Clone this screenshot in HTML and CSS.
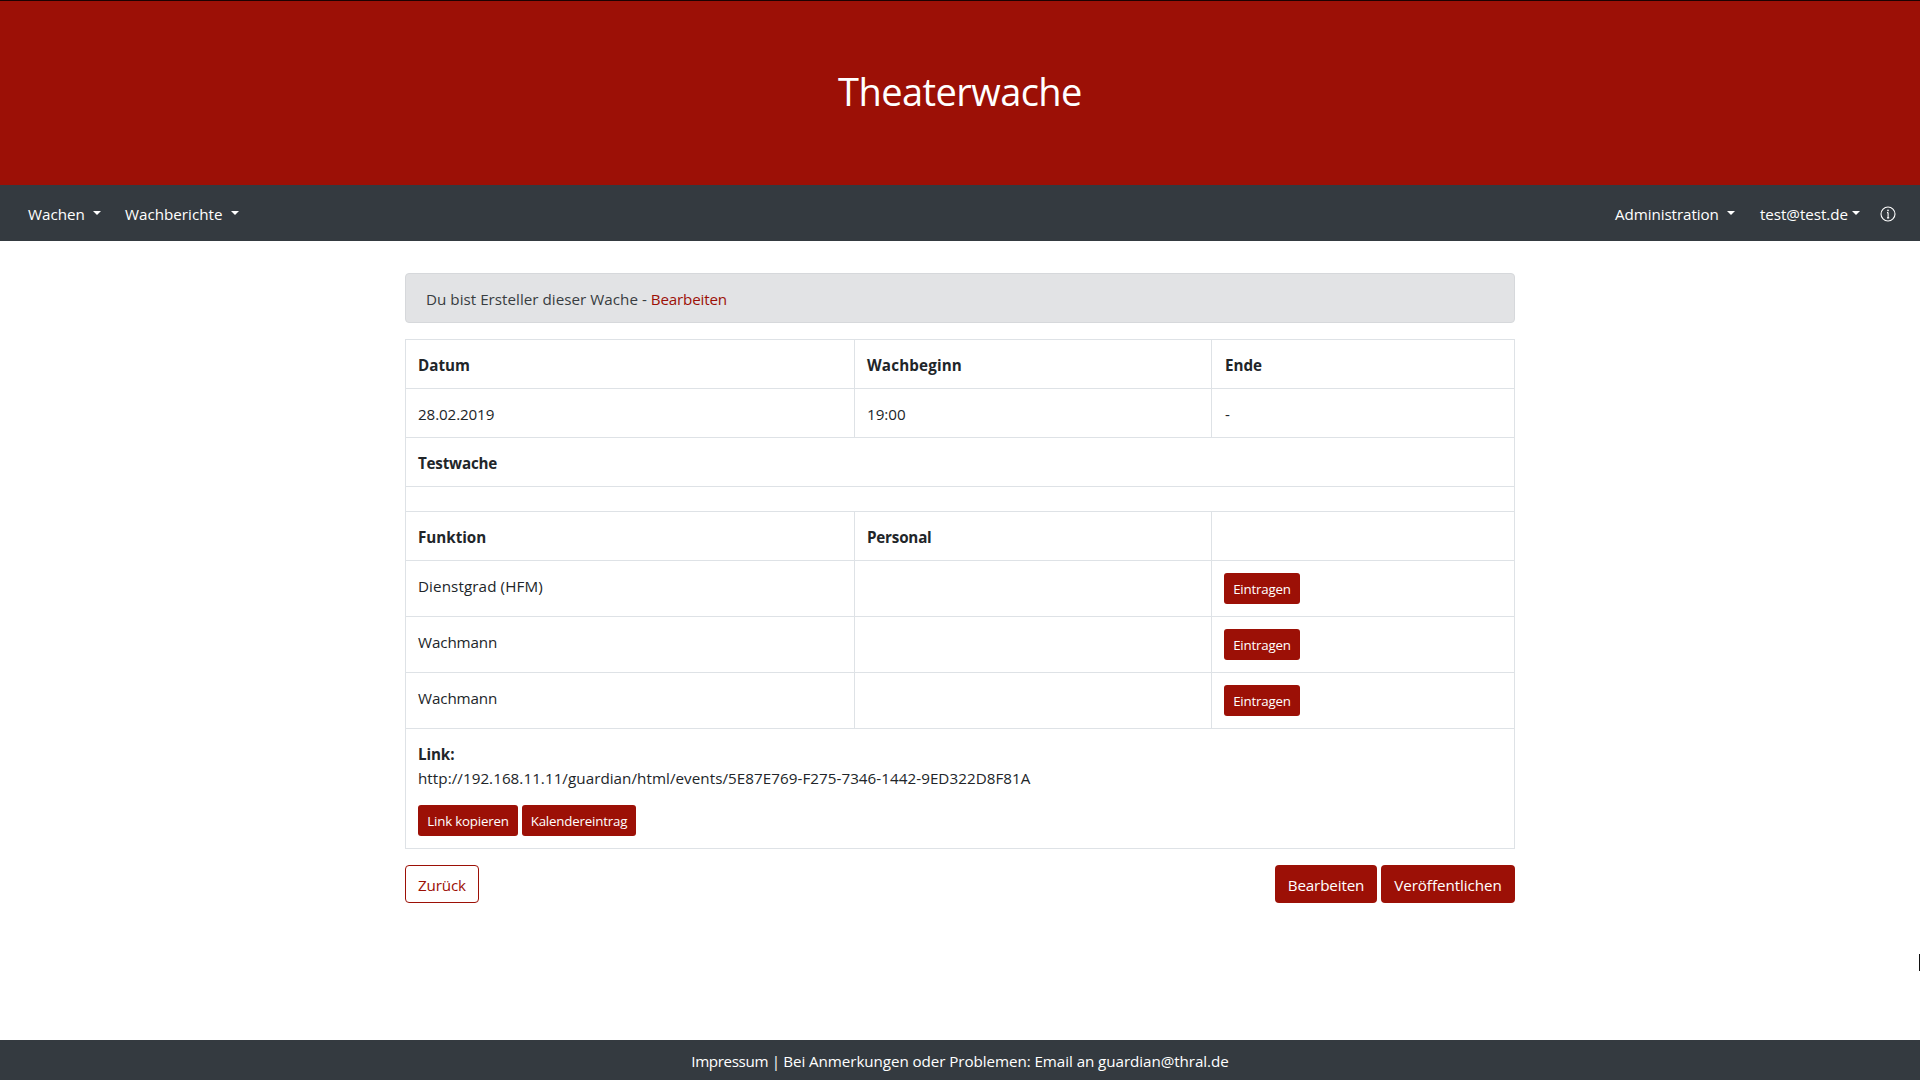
FILE: index.html
```
<!DOCTYPE html>
<html lang="de">
<head>
<meta charset="utf-8">
<title>Theaterwache</title>
<link rel="stylesheet" href="styles.css">
</head>
<body>
<header class="jumbotron"><h1 class="title">Theaterwache</h1></header>
<nav class="navbar">
  <a class="nav-link wachen">Wachen<span class="caret"></span></a>
  <a class="nav-link berichte">Wachberichte<span class="caret"></span></a>
  <a class="nav-link admin">Administration<span class="caret"></span></a>
  <a class="nav-link user">test@test.de<span class="caret"></span></a>
  <a class="nav-link info" aria-label="Info"><svg class="info-icon" viewBox="0 0 16 16"><circle cx="8" cy="8" r="7" fill="none" stroke="currentColor" stroke-width="1.1"/><path d="M8.1 12V6.5M7 6.6h1.1M7 11.9h2.2" fill="none" stroke="currentColor" stroke-width="1.1"/><circle cx="8" cy="4.4" r=".85" fill="currentColor"/></svg></a>
</nav>
<main class="container">
  <div class="alert"><span class="alert-text">Du bist Ersteller dieser Wache - </span><a class="alert-link">Bearbeiten</a></div>
  <table class="table">
    <colgroup><col class="col-a"><col class="col-b"><col class="col-c"></colgroup>
    <tbody>
      <tr><th>Datum</th><th class="wide">Wachbeginn</th><th class="end">Ende</th></tr>
      <tr><td>28.02.2019</td><td class="time">19:00</td><td class="end">-</td></tr>
      <tr><th class="tight" colspan="3">Testwache</th></tr>
      <tr><td class="spacer" colspan="3"></td></tr>
      <tr><th>Funktion</th><th class="tight">Personal</th><th></th></tr>
      <tr><td class="rank">Dienstgrad (HFM)</td><td></td><td class="action"><a class="btn btn-sm enter">Eintragen</a></td></tr>
      <tr><td>Wachmann</td><td></td><td class="action"><a class="btn btn-sm enter">Eintragen</a></td></tr>
      <tr><td>Wachmann</td><td></td><td class="action"><a class="btn btn-sm enter">Eintragen</a></td></tr>
      <tr><td class="link-cell" colspan="3"><b class="link-label">Link:</b><div class="url">http://192.168.11.11/guardian/html/events/5E87E769-F275-7346-1442-9ED322D8F81A</div>
        <div class="link-actions"><a class="btn btn-sm copy">Link kopieren</a><a class="btn btn-sm calendar">Kalendereintrag</a></div></td></tr>
    </tbody>
  </table>
  <div class="actions">
    <a class="btn btn-outline back">Zurück</a>
    <a class="btn edit">Bearbeiten</a>
    <a class="btn publish">Veröffentlichen</a>
  </div>
</main>
<div class="edge-mark"></div>
<footer class="footer"><span class="imprint">Impressum | </span>Bei Anmerkungen oder Problemen: Email an guardian@thral.de</footer>
</body>
</html>
```
FILE: styles.css
```
* { box-sizing: border-box; }
body {
  margin: 0;
  height: 1080px;
  display: flex;
  flex-direction: column;
  overflow: hidden;
  background: #fff;
  color: #212529;
  font: 15.2px/24px "Open Sans", "Noto Sans", sans-serif;
}
.jumbotron {
  height: 185px;
  border-top: 1px solid #1c0202;
  background: #9c1006;
  color: #fff;
  text-align: center;
  padding-top: 66px;
}
.title { margin: 0; font-size: 38px; line-height: 48px; font-weight: 400; letter-spacing: -.56px; }
.navbar {
  height: 56px;
  display: flex;
  align-items: center;
  padding: 2px 24px 0 28px;
  background: #343a40;
  color: #fff;
}
.nav-link { display: flex; align-items: center; white-space: nowrap; }
.caret {
  margin: -3px 0 0 auto;
  border: 4.8px solid transparent;
  border-top-color: currentColor;
  border-bottom: 0;
}
.wachen { width: 73px; margin-right: 24px; }
.berichte { width: 114px; margin-right: auto; }
.admin { width: 120px; margin-right: 25px; letter-spacing: -.08px; }
.user { width: 100px; margin-right: 20px; letter-spacing: -.06px; }
.info-icon { width: 16px; height: 16px; }
.container { width: 1110px; margin: 32px auto 0; flex: 1; }
.alert {
  height: 50px;
  margin-bottom: 16px;
  padding: 13px 20px 11px;
  border: 1px solid #d6d8db;
  border-radius: 4px;
  background: #e2e3e5;
  color: #383d41;
  white-space: pre;
}
.alert-text { letter-spacing: .02px; }
.alert-link { color: #9c1006; letter-spacing: -.18px; }
.table {
  width: 1109px;
  table-layout: fixed;
  border-collapse: collapse;
  margin-bottom: 16px;
}
.col-a { width: 449px; }
.col-b { width: 357px; }
.col-c { width: 303px; }
.table td, .table th {
  border: 1px solid #dee2e6;
  padding: 13px 12px 11px;
  vertical-align: top;
  text-align: left;
  letter-spacing: -.12px;
}
.table th { letter-spacing: -.02px; }
.table .wide { letter-spacing: .16px; }
.table .time { letter-spacing: 0; }
.table .rank { letter-spacing: .1px; }
.table .tight { letter-spacing: -.2px; }
.table .end { padding-left: 13px; }
.table .spacer { height: 25px; padding: 0; }
.table .action { padding: 12px; }
.link-label { display: block; }
.table .link-cell { padding-bottom: 12px; }
.url { letter-spacing: .05px; }
.link-actions { display: flex; gap: 4px; margin-top: 15px; }
.btn {
  display: block;
  height: 38px;
  padding-top: 8px;
  border-radius: 4px;
  background: #9c1006;
  color: #fff;
  text-align: center;
  letter-spacing: -.14px;
  white-space: nowrap;
}
.btn-sm {
  height: 31px;
  padding-top: 6px;
  border-radius: 3px;
  font-size: 13.3px;
  line-height: 21px;
  letter-spacing: -.18px;
}
.enter { width: 76px; }
.copy { width: 100px; }
.calendar { width: 114px; }
.actions { display: flex; gap: 4px; }
.btn-outline { border: 1px solid #9c1006; background: #fff; color: #9c1006; padding-top: 7px; }
.back { width: 74px; margin-right: auto; }
.edit { width: 102px; }
.publish { width: 134px; letter-spacing: -.06px; }
.edge-mark { position: absolute; left: 1919px; top: 954px; width: 1px; height: 17px; background: #111; }
.footer {
  height: 40px;
  padding-top: 9px;
  background: #343a40;
  color: #fff;
  text-align: center;
  letter-spacing: -.07px;
}
.imprint { letter-spacing: -.38px; }
```
